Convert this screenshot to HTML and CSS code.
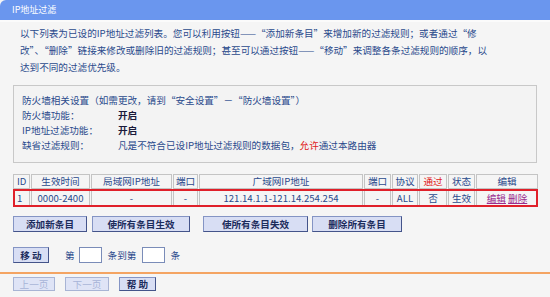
FILE: index.html
```html
<!DOCTYPE html>
<html>
<head>
<meta charset="utf-8">
<link rel="stylesheet" href="styles.css">
</head>
<body>
<div class="titlebar">IP地址过滤</div>
<div class="content">
  <p class="desc">以下列表为已设的IP地址过滤列表。您可以利用按钮——“添加新条目”来增加新的过滤规则；或者通过“修<br>改”、“删除”链接来修改或删除旧的过滤规则；甚至可以通过按钮——“移动”来调整各条过滤规则的顺序，以<br>达到不同的过滤优先级。</p>
  <div class="box">
    <div class="row">防火墙相关设置（如需更改，请到“安全设置”－“防火墙设置”）</div>
    <div class="row"><span class="label">防火墙功能：</span><b class="val">开启</b></div>
    <div class="row"><span class="label">IP地址过滤功能：</span><b class="val">开启</b></div>
    <div class="row"><span class="label">缺省过滤规则：</span><span>凡是不符合已设IP地址过滤规则的数据包，<span class="red">允许</span>通过本路由器</span></div>
  </div>
  <div class="tablewrap">
    <table class="list">
      <tr class="head">
        <td class="c-id">ID</td>
        <td class="c-time">生效时间</td>
        <td class="c-lan">局域网IP地址</td>
        <td class="c-port">端口</td>
        <td class="c-wan">广域网IP地址</td>
        <td class="c-port2">端口</td>
        <td class="c-proto">协议</td>
        <td class="c-pass red">通过</td>
        <td class="c-state">状态</td>
        <td class="c-edit">编辑</td>
      </tr>
      <tr class="data">
        <td class="left">1</td>
        <td>0000-2400</td>
        <td>-</td>
        <td>-</td>
        <td>121.14.1.1-121.14.254.254</td>
        <td>-</td>
        <td>ALL</td>
        <td>否</td>
        <td>生效</td>
        <td><a class="lnk" href="#">编辑</a> <a class="lnk" href="#">删除</a></td>
      </tr>
    </table>
    <div class="mark"></div>
  </div>
  <div class="btnrow">
    <button class="btn b1">添加新条目</button>
    <button class="btn b2">使所有条目生效</button>
    <button class="btn b3">使所有条目失效</button>
    <button class="btn b4">删除所有条目</button>
  </div>
  <div class="moverow">
    <button class="btn bmove">移 动</button>
    <span class="t1">第</span>
    <span class="inp"></span>
    <span class="t2">条到第</span>
    <span class="inp"></span>
    <span class="t3">条</span>
  </div>
</div>
<div class="rule"></div>
<div class="footer">
  <button class="btn small dis f1">上一页</button>
  <button class="btn small dis f2">下一页</button>
  <button class="btn small f3">帮 助</button>
</div>
</body>
</html>
```
FILE: styles.css
```css
html, body {
  margin: 0;
  padding: 0;
}
body {
  width: 550px;
  height: 297px;
  overflow: hidden;
  background: #f5f5f5;
  font-family: "Noto Sans CJK SC", "DejaVu Sans", sans-serif;
  font-size: 9.6px;
  color: #2a4a8c;
}
.titlebar {
  height: 20px;
  line-height: 20px;
  background: #6a96ee;
  border-top-left-radius: 6px;
  color: #ffffff;
  font-size: 9px;
  padding-left: 12px;
  border-bottom: 2px solid #fbfbfb;
}
.content {
  padding: 3px 13px 0 13px;
}
.desc {
  margin: 0;
  padding-left: 7px;
  line-height: 17px;
}
.box {
  margin-top: 9px;
  border: 1px solid #c8c8c8;
  padding: 7px 8px 9px 8px;
  line-height: 15px;
  background: #f3f3f3;
}
.row {
  display: flex;
}
.label {
  width: 96px;
  flex: none;
}
.val {
  color: #1a1a3a;
  font-weight: bold;
}
.red {
  color: #e02020;
}
.tablewrap {
  position: relative;
  margin-top: 10px;
}
.list {
  border-collapse: separate;
  border-spacing: 1px;
  table-layout: fixed;
  margin-left: -1px;
  width: 527px;
}
.list td {
  box-sizing: border-box;
  border: 1px solid #c4c4c4;
  padding: 0;
  text-align: center;
  white-space: nowrap;
  overflow: hidden;
}
.list .head td {
  height: 15px;
  line-height: 13px;
}
.list .data td {
  height: 17px;
  line-height: 15px;
  font-family: "Noto Sans CJK SC", "DejaVu Sans", sans-serif;
}
.list td.left, .list td.c-id {
  text-align: left;
  padding-left: 3px;
}
.c-id { width: 17px; }
.c-time { width: 59px; }
.c-lan { width: 81px; }
.c-port { width: 25px; }
.c-wan { width: 164px; }
.c-port2 { width: 27px; }
.c-proto { width: 26px; }
.c-pass { width: 28px; }
.c-state { width: 27px; }
.c-edit { width: 62px; }
.lnk {
  color: #9b2c8e;
  text-decoration: underline;
}
.mark {
  position: absolute;
  left: 0;
  top: 16px;
  width: 525px;
  height: 18px;
  box-sizing: border-box;
  border: 2px solid #e0202a;
}
.btn {
  box-sizing: border-box;
  height: 16px;
  padding: 0;
  margin: 0;
  font-family: "Noto Sans CJK SC", "DejaVu Sans", sans-serif;
  font-size: 9.6px;
  font-weight: bold;
  line-height: 14px;
  color: #1c2c5c;
  background: #d8def4;
  border: 1px solid #44548a;
  border-top-color: #8494c4;
  border-left-color: #8494c4;
}
.btnrow {
  display: flex;
  margin-top: 8px;
}
.b1 { width: 74px; }
.b2 { width: 98px; margin-left: 5px; }
.b3 { width: 105px; margin-left: 13px; }
.b4 { width: 90px; margin-left: 4px; }
.moverow {
  display: flex;
  align-items: center;
  margin-top: 15px;
  height: 16px;
}
.bmove { width: 36px; }
.t1 { margin-left: 16px; }
.inp {
  box-sizing: border-box;
  width: 23px;
  height: 16px;
  background: #ffffff;
  border: 1px solid #7a8cb8;
  margin-left: 4px;
}
.t2 { margin-left: 6px; }
.inp + .t2 + .inp { margin-left: 6px; }
.t3 { margin-left: 5px; }
.rule {
  margin-top: 9px;
  height: 2px;
  background: #f4a462;
}
.footer {
  display: flex;
  padding: 3px 13px 0 13px;
}
.small {
  height: 14px;
  line-height: 12px;
}
.dis {
  color: #a8b4d8;
  border-color: #a8b4d4;
  background: #dfe4f6;
  font-weight: normal;
}
.f1 { width: 42px; }
.f2 { width: 44px; margin-left: 10px; }
.f3 { width: 37px; margin-left: 10px; }
```
